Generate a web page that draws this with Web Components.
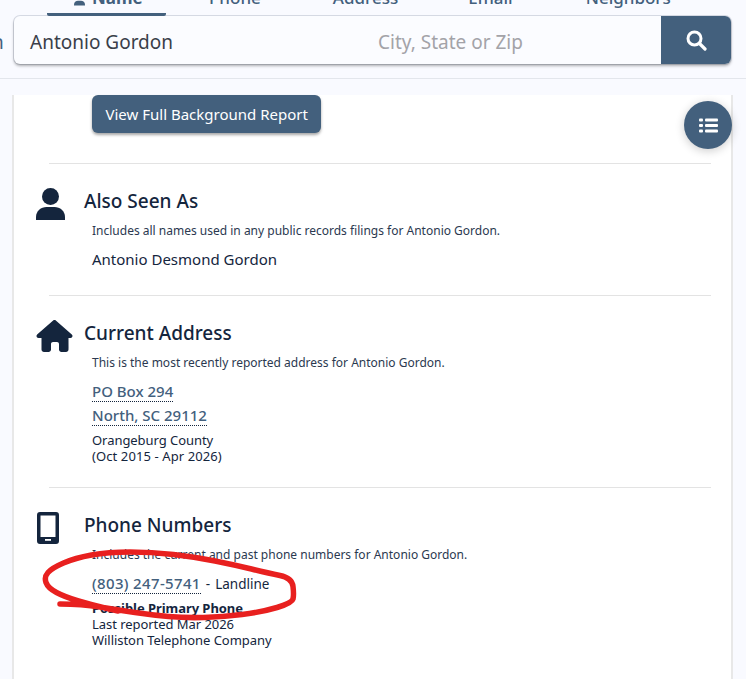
<!DOCTYPE html>
<html>
<head>
<meta charset="utf-8">
<style>
  html, body { margin: 0; padding: 0; height: 679px; overflow: hidden; }
  body { background: #f9faff; font-family: "Noto Sans", "Open Sans", sans-serif; color: #14253d; position: relative; }
  .val { font-size: 15px; line-height: 20px; margin-top: 10px; }
  .small { font-size: 13px; line-height: 16px; letter-spacing: -.05px; }
</style>
</head>
<body>
<search-header></search-header>
<report-card>
  <report-section title="Also Seen As" icon="person" desc="Includes all names used in any public records filings for Antonio Gordon." style="padding-bottom:26px">
    <div class="val">Antonio Desmond Gordon</div>
  </report-section>
  <report-section title="Current Address" icon="home" desc="This is the most recently reported address for Antonio Gordon." style="padding-bottom:23px">
    <div class="val">
      <dot-link>PO Box 294</dot-link><br>
      <dot-link>North, SC 29112</dot-link>
    </div>
    <div class="small" style="margin-top:3px">Orangeburg County<br><span style="letter-spacing:.1px">(Oct 2015 - Apr 2026)</span></div>
  </report-section>
  <report-section title="Phone Numbers" icon="phone" desc="Includes the current and past phone numbers for Antonio Gordon.">
    <div class="val" style="font-size:13.500px;word-spacing:1.500px"><dot-link style="letter-spacing:.35px;word-spacing:0">(803) 247-5741</dot-link> - Landline</div>
    <div class="small" style="margin-top:3px"><b>Possible Primary Phone</b><br>Last reported Mar 2026<br>Williston Telephone Company</div>
  </report-section>
</report-card>
<fab-button></fab-button>
<red-scribble></red-scribble>

<script>
const ICONS = {
  person: `<svg viewBox="0 0 29 32" width="29" height="32"><circle cx="14.500" cy="8.500" r="8.500" fill="#14253d"/><path fill="#14253d" d="M0 32v-3C0 23 5 19 10.500 19h8C24 19 29 23 29 29v3z"/></svg>`,
  home: `<svg viewBox="0 0 576 512" width="37" height="32"><path fill="#14253d" d="M575.800 255.500c0 18-15 32.100-32 32.100h-32l.7 160.200c0 2.700-.2 5.400-.5 8.100V472c0 22.100-17.900 40-40 40h-72c-22.100 0-40-17.900-40-40v-88c0-17.700-14.300-32-32-32h-64c-17.700 0-32 14.300-32 32v88c0 22.100-17.900 40-40 40h-72c-22.100 0-40-17.900-40-40V287.600H32c-18 0-32-14-32-32.100 0-9 3-17 10-24L266.400 8c7-7 15-8 22-8s15 2 21 7l255.400 224.500c8 7 12 15 11 24z"/></svg>`,
  phone: `<svg viewBox="0 0 22 32" width="22" height="32" style="margin-left:1px"><path fill="#14253d" fill-rule="evenodd" d="M3 0h16a3 3 0 0 1 3 3v26a3 3 0 0 1-3 3H3a3 3 0 0 1-3-3V3a3 3 0 0 1 3-3zM3.500 3.500v21.500h15V3.500z"/><rect x="8" y="27" width="6" height="1.800" fill="#fff"/></svg>`
};

class SearchHeader extends HTMLElement {
  constructor() {
    super();
    this.shadowDOM = this.attachShadow({ mode: "open" });
    this.shadowDOM.innerHTML = `
    <style>
      :host { display: block; height: 79px; box-sizing: border-box; border-bottom: 1px solid #e3e6ec; position: relative; overflow: hidden; }
      .tabs { display: flex; height: 16px; font-size: 17px; color: #43607d; font-weight: 500; }
      .tab { height: 30px; margin-top: -14px; box-sizing: border-box; line-height: 24px; flex: none; white-space: nowrap; }
      .tab.on { width: 119px; margin-left: 47px; padding-left: 27px; border-bottom: 3px solid #43607d; font-weight: 700; border-radius: 0 0 2px 2px; }
      .tab.on svg { vertical-align: -2px; margin-right: 7px; }
      .bar { display: flex; height: 48px; margin: 0 15px 0 14px; background: #fbfcff; border-radius: 6px; box-shadow: 0 2px 3px rgba(0,0,0,.3), 0 0 0 1px #d8dce6; overflow: hidden; }
      .field { font-size: 19px; line-height: 52px; }
      .name { width: 348px; padding-left: 16px; color: #3a3f4a; }
      .place { flex: 1; color: #a3a3a8; }
      .go { width: 70px; background: #43607d; display: flex; align-items: center; justify-content: center; }
      .cut { position: absolute; left: -8px; top: 30px; font-size: 19px; line-height: 24px; color: #43607d; }
    </style>
    <div class="tabs">
      <div class="tab on"><svg viewBox="0 0 29 32" width="11" height="13"><circle cx="14.500" cy="8.500" r="8.500" fill="#43607d"/><path fill="#43607d" d="M0 32v-3C0 23 5 19 10.500 19h8C24 19 29 23 29 29v3z"/></svg>Name</div>
      <div class="tab" style="margin-left:43px">Phone</div>
      <div class="tab" style="margin-left:72px">Address</div>
      <div class="tab" style="margin-left:70px">Email</div>
      <div class="tab" style="margin-left:73px">Neighbors</div>
    </div>
    <div class="bar">
      <div class="field name">Antonio Gordon</div>
      <div class="field place">City, State or Zip</div>
      <div class="go"><svg width="21" height="21" viewBox="0 0 21 21"><circle cx="8.500" cy="8.500" r="6.500" fill="none" stroke="#fff" stroke-width="3"/><path d="M13.500 13.500l5.500 5.500" stroke="#fff" stroke-width="3.200" stroke-linecap="round"/></svg></div>
    </div>
    <div class="cut">h</div>`;
  }
}

class ReportCard extends HTMLElement {
  constructor() {
    super();
    this.shadowDOM = this.attachShadow({ mode: "open" });
    this.shadowDOM.innerHTML = `
    <style>
      :host { display: block; margin: 16px 13px 0 12px; background: #fff; border-left: 2px solid #e8e8e8; border-right: 2px solid #e8e8e8; height: 600px; box-sizing: border-box; }
      .cta { width: fit-content; margin: 0 0 30px 78px; padding: 0 13.500px; height: 38px; line-height: 39px; font-size: 15px; background: #43607d; color: #fff; border-radius: 6px; box-shadow: 0 2px 3px rgba(0,0,0,.35); }
      ::slotted(report-section) { border-top: 1px solid #e3e3e3; }
    </style>
    <div class="cta">View Full Background Report</div>
    <slot></slot>`;
  }
}

class ReportSection extends HTMLElement {
  constructor() {
    super();
    this.shadowDOM = this.attachShadow({ mode: "open" });
  }
  connectedCallback() {
    this.shadowDOM.innerHTML = `
    <style>
      :host { display: block; margin: 0 20px 0 35px; padding-top: 24px; }
      .head { display: flex; align-items: flex-start; height: 32px; margin-left: -13px; }
      .ico { width: 37px; flex: none; margin-right: 11px; display: flex; }
      h2 { margin: 0; font-size: 19px; font-weight: 500; line-height: 26px; color: #14253d; }
      .body { padding-left: 43px; }
      .desc { font-size: 12px; line-height: 16px; margin-top: 3px; color: #2b3950; }
    </style>
    <div class="head"><span class="ico">${ICONS[this.getAttribute("icon")]}</span><h2>${this.getAttribute("title")}</h2></div>
    <div class="body">
      <div class="desc">${this.getAttribute("desc")}</div>
      <slot></slot>
    </div>`;
  }
}

class DotLink extends HTMLElement {
  constructor() {
    super();
    this.shadowDOM = this.attachShadow({ mode: "open" });
    this.shadowDOM.innerHTML = `
    <style>
      :host { display: inline-block; font-size: 15px; line-height: 20px; font-weight: 500; color: #43607d; border-bottom: 1px dotted #14253d; margin-bottom: 3px; }
    </style>
    <slot></slot>`;
  }
}

class FabButton extends HTMLElement {
  constructor() {
    super();
    this.shadowDOM = this.attachShadow({ mode: "open" });
    this.shadowDOM.innerHTML = `
    <style>
      :host { position: absolute; left: 684px; top: 101px; width: 48px; height: 48px; border-radius: 50%; background: #43607d; box-shadow: 0 2px 10px rgba(0,0,0,.2); display: flex; align-items: center; justify-content: center; }
    </style>
    <svg width="19" height="15" viewBox="0 0 19 15" fill="#fff"><rect x="0" y="0.500" width="4" height="3" rx="1"/><rect x="6" y="0.500" width="13" height="3" rx="1"/><rect x="0" y="6" width="4" height="3" rx="1"/><rect x="6" y="6" width="13" height="3" rx="1"/><rect x="0" y="11.500" width="4" height="3" rx="1"/><rect x="6" y="11.500" width="13" height="3" rx="1"/></svg>`;
  }
}

// traced off the reference, smoothed through midpoints
const SCRIBBLE = [[60,604],[82,604],[118,610],[152,615],[185,618],[222,617],[262,612],[292,603],[294,595],[292,578],[268,573],[235,565],[195,557],[152,552],[108,552],[75,558],[52,568],[44,577],[48,588],[65,597],[92,605],[118,611]];

class RedScribble extends HTMLElement {
  constructor() {
    super();
    this.shadowDOM = this.attachShadow({ mode: "open" });
    let d = `M${SCRIBBLE[0].join(" ")}`;
    for (let i = 1; i < SCRIBBLE.length - 1; i++) {
      const [x, y] = SCRIBBLE[i];
      const [nx, ny] = SCRIBBLE[i + 1];
      d += ` Q${x} ${y} ${(x + nx) / 2} ${(y + ny) / 2}`;
    }
    d += ` L${SCRIBBLE[SCRIBBLE.length - 1].join(" ")}`;
    this.shadowDOM.innerHTML = `
    <style>
      :host { position: absolute; left: 0; top: 0; width: 746px; height: 679px; pointer-events: none; }
    </style>
    <svg width="746" height="679" viewBox="0 0 746 679">
      <path d="${d}" fill="none" stroke="#e8201f" stroke-width="5.500" stroke-linecap="round" stroke-linejoin="round"/>
    </svg>`;
  }
}

customElements.define("search-header", SearchHeader);
customElements.define("report-card", ReportCard);
customElements.define("report-section", ReportSection);
customElements.define("dot-link", DotLink);
customElements.define("fab-button", FabButton);
customElements.define("red-scribble", RedScribble);
</script>
</body>
</html>
